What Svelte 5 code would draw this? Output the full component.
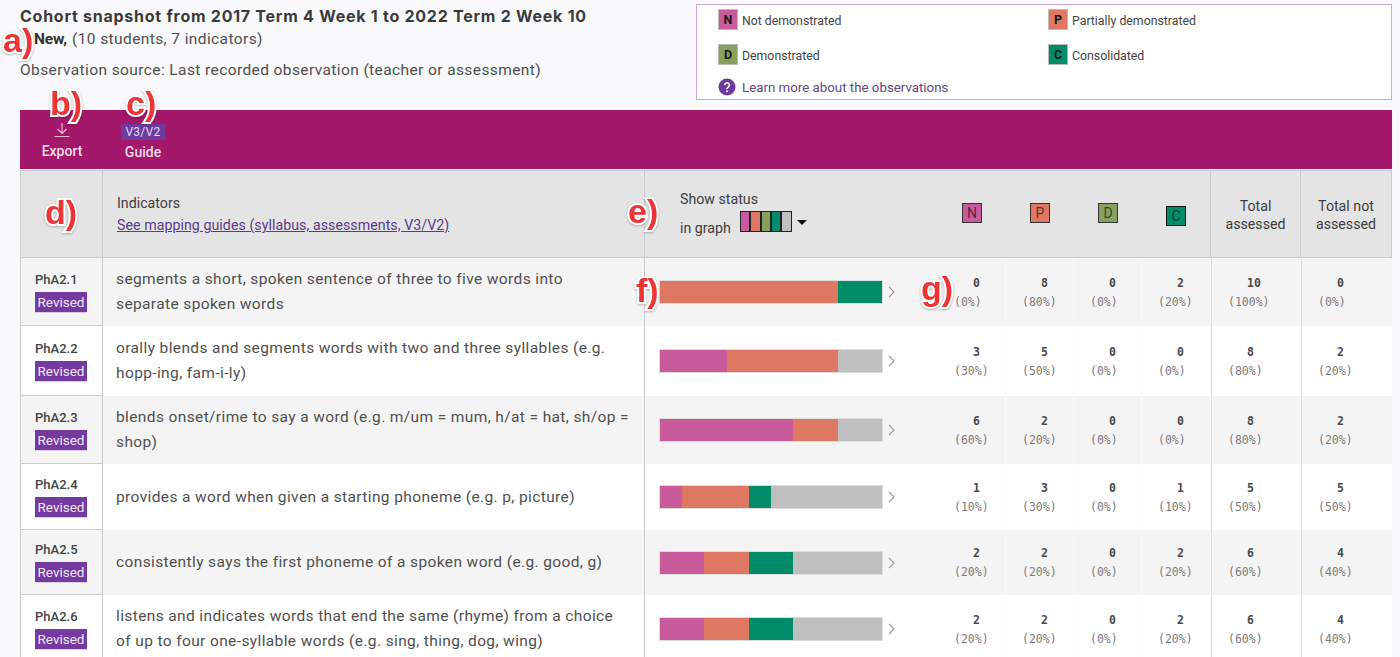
<script>
  const legend = [
    { k: 'N', label: 'Not demonstrated' },
    { k: 'P', label: 'Partially demonstrated' },
    { k: 'D', label: 'Demonstrated' },
    { k: 'C', label: 'Consolidated' }
  ];
  const rows = [
    { id: 'PhA2.1', lines: ['segments a short, spoken sentence of three to five words into', 'separate spoken words'], v: [0, 8, 0, 2] },
    { id: 'PhA2.2', lines: ['orally blends and segments words with two and three syllables (e.g.', 'hopp-ing, fam-i-ly)'], v: [3, 5, 0, 0] },
    { id: 'PhA2.3', lines: ['blends onset/rime to say a word (e.g. m/um = mum, h/at = hat, sh/op =', 'shop)'], v: [6, 2, 0, 0] },
    { id: 'PhA2.4', lines: ['provides a word when given a starting phoneme (e.g. p, picture)'], v: [1, 3, 0, 1] },
    { id: 'PhA2.5', lines: ['consistently says the first phoneme of a spoken word (e.g. good, g)'], v: [2, 2, 0, 2] },
    { id: 'PhA2.6', lines: ['listens and indicates words that end the same (rhyme) from a choice', 'of up to four one-syllable words (e.g. sing, thing, dog, wing)'], v: [2, 2, 0, 2] }
  ];
  const keys = ['N', 'P', 'D', 'C'];
  const total = 10;
  const sum = (v) => v.reduce((a, b) => a + b, 0);
  const notes = [
    { t: 'a)', c: 'na' }, { t: 'b)', c: 'nb' }, { t: 'c)', c: 'nc' }, { t: 'd)', c: 'nd' },
    { t: 'e)', c: 'ne' }, { t: 'f)', c: 'nf' }, { t: 'g)', c: 'ng' }
  ];
</script>

<div class="page">
  <header class="top">
    <div class="intro">
      <h1>Cohort snapshot from 2017 Term 4 Week 1 to 2022 Term 2 Week 10</h1>
      <p class="sub"><b>New,</b> (10 students, 7 indicators)</p>
      <p class="src">Observation source: Last recorded observation (teacher or assessment)</p>
    </div>
    <aside class="legend">
      <div class="legend-grid">
        {#each legend as l}
          <div class="legend-item">
            <span class="swatch s{l.k}">{l.k}</span>
            <span class="legend-label">{l.label}</span>
          </div>
        {/each}
      </div>
      <div class="learn">
        <svg width="18" height="18" viewBox="0 0 18 18"><circle cx="9" cy="9" r="8.5" fill="#6f3a9f"/><path d="M6.7 7.1a2.3 2.3 0 1 1 3.6 1.9c-.8.5-1.3 1-1.3 1.9" fill="none" stroke="#fff" stroke-width="1.6"/><circle cx="9" cy="13.2" r="1" fill="#fff"/></svg>
        <span>Learn more about the observations</span>
      </div>
    </aside>
  </header>

  <div class="toolbar">
    <div class="tool export">
      <svg width="18" height="16" viewBox="0 0 18 16" fill="none" stroke="#e9bcd6" stroke-width="1.2"><path d="M9 1v10M4.5 7 9 11.5 13.500 7M1.500 14.500h15"/></svg>
      <span>Export</span>
    </div>
    <div class="tool guide">
      <span class="vbadge">V3/V2</span>
      <span>Guide</span>
    </div>
  </div>

  <div class="table">
    <div class="th blank"></div>
    <div class="th ind">
      <span>Indicators</span>
      <span class="map">See mapping guides (syllabus, assessments, V3/V2)</span>
    </div>
    <div class="th graph">
      <span>Show status</span>
      <div class="graph-line">
        <span>in graph</span>
        <span class="mini">
          <i class="sN"></i><i class="sP"></i><i class="sD"></i><i class="sC"></i><i class="sG"></i>
        </span>
        <span class="caret"></span>
      </div>
    </div>
    <div class="th keys">
      {#each keys as k}
        <div class="keycell"><span class="key s{k} k{k}">{k}</span></div>
      {/each}
    </div>
    <div class="th tot">Total<br />assessed</div>
    <div class="th tot">Total not<br />assessed</div>

    {#each rows as r, i}
      <div class="td code" class:alt={i % 2 === 0}>
        <span>{r.id}</span>
        <span class="rev">Revised</span>
      </div>
      <div class="td text" class:alt={i % 2 === 0}>
        {#each r.lines as line}<div>{line}</div>{/each}
      </div>
      <div class="td bar-cell" class:alt={i % 2 === 0}>
        <div class="bar">
          {#each r.v as n, j}
            {#if n > 0}<span class="s{keys[j]}" style="width:{(n / total) * 100}%"></span>{/if}
          {/each}
          <span class="sG rest"></span>
        </div>
        <svg class="chev" width="7" height="12" viewBox="0 0 7 12" fill="none" stroke="#999" stroke-width="1.100"><path d="m1 1 5 5-5 5"/></svg>
      </div>
      <div class="nums">
        {#each r.v as n}
          <div class="num" class:alt={i % 2 === 0}>
            <b>{n}</b><span>({(n / total) * 100}%)</span>
          </div>
        {/each}
      </div>
      <div class="num wide" class:alt={i % 2 === 0}>
        <b>{sum(r.v)}</b><span>({(sum(r.v) / total) * 100}%)</span>
      </div>
      <div class="num wide" class:alt={i % 2 === 0}>
        <b>{total - sum(r.v)}</b><span>({((total - sum(r.v)) / total) * 100}%)</span>
      </div>
    {/each}
  </div>

  {#each notes as n}
    <span class="note {n.c}">{n.t}</span>
  {/each}
</div>

<style>
  :global(body) {
    margin: 0;
    background: #f9f9fb;
  }
  .page {
    position: relative;
    width: 1400px;
    height: 657px;
    overflow: hidden;
    font-family: Roboto, "Liberation Sans", sans-serif;
    color: #3f3f3f;
    background: #f9f9fb;
  }
  .top {
    display: flex;
    justify-content: space-between;
    height: 110px;
    padding: 4px 8px 0 20px;
    box-sizing: border-box;
  }
  h1 {
    margin: 2px 0 0;
    font: 700 16px/20px Inter, "Open Sans", sans-serif;
    letter-spacing: 0.74px;
    color: #3b3b3b;
  }
  .sub, .src {
    margin: 0;
    font-size: 15.5px;
    line-height: 20px;
    letter-spacing: 0.4px;
    color: #505050;
  }
  .sub { margin-top: 3px; padding-left: 14px; }
  .sub b { font-weight: 700; color: #333; letter-spacing: -0.2px; margin-right: 1px; }
  .src { margin-top: 11px; }
  .legend {
    width: 696px;
    height: 96px;
    box-sizing: border-box;
    border: 1px solid #c9aae3;
    background: #fff;
    padding: 4px 0 0 21px;
    font-size: 12.3px;
    color: #444;
  }
  .legend-grid {
    display: grid;
    grid-template-columns: 330px 1fr;
    grid-auto-rows: 35px;
  }
  .legend-item {
    display: flex;
    align-items: flex-start;
    gap: 4px;
  }
  .legend-label {
    line-height: 22px;
    padding-top: 1px;
    margin-right: 1px;
  }
  .swatch {
    width: 20px;
    height: 21px;
    box-sizing: border-box;
    border: 1px solid #bbb;
    text-align: center;
    font-weight: 700;
    font-size: 12.5px;
    line-height: 19px;
    color: #1a1a1a;
  }
  .learn {
    display: flex;
    align-items: center;
    gap: 6px;
    margin-top: -1px;
    font-size: 13.3px;
    color: #5f4a80;
  }
  .sN { background: #c95a9b; }
  .sP { background: #df7863; }
  .sD { background: #87a05e; }
  .sC { background: #008c68; }
  .sG { background: #bfbfbf; }
  .toolbar {
    display: flex;
    width: 1372px;
    height: 59px;
    margin-left: 20px;
    background: #a3186a;
    color: #f3dbe9;
    font-size: 14px;
    font-weight: 500;
  }
  .tool {
    display: flex;
    flex-direction: column;
    align-items: center;
    box-sizing: border-box;
  }
  .export { width: 84px; padding-top: 12px; gap: 5px; }
  .guide { width: 76px; margin-left: 1px; padding-top: 14px; gap: 4px; }
  .vbadge {
    background: #6f3a9f;
    color: #e6dcf0;
    font-size: 12px;
    font-weight: 400;
    line-height: 16px;
    padding: 0 4px;
    letter-spacing: 0.3px;
  }
  .table {
    display: grid;
    width: 1372px;
    margin: 1px 0 0 20px;
    grid-template-columns: 83px 542px 293px 273px 90px 91px;
    grid-template-rows: 88px 68px 70px 68px 66px 65px 68px;
  }
  .th {
    background: #e4e4e4;
    box-sizing: border-box;
    border-top: 1px solid #ccc;
    border-bottom: 1px solid #ccc;
    font-size: 14.2px;
    color: #3d3d3d;
  }
  .blank { border-left: 1px solid #ccc; border-right: 1px solid #ccc; }
  .ind {
    display: flex;
    flex-direction: column;
    gap: 8px;
    padding: 25px 0 0 14px;
    border-right: 1px solid #ccc;
    line-height: 14px;
  }
  .map { color: #5b3a8c; text-decoration: underline; letter-spacing: 0.05px; }
  .graph {
    padding: 20px 0 0 35px;
    line-height: 17px;
  }
  .graph-line {
    display: flex;
    align-items: flex-start;
    margin-top: 4px;
  }
  .graph-line > span:first-child { margin-top: 8px; }
  .mini {
    display: flex;
    gap: 2px;
    width: 52px;
    height: 21px;
    margin: -1px 0 0 9px;
    box-sizing: border-box;
    border: 1px solid #222;
    background: #222;
  }
  .mini i {
    flex: 1 1 0;
  }
  .caret {
    width: 0;
    height: 0;
    margin: 8px 0 0 5px;
    border: 5px solid transparent;
    border-top-color: #111;
    border-bottom: 0;
  }
  .keys {
    display: grid;
    grid-template-columns: repeat(4, 1fr);
    border-right: 1px solid #ccc;
  }
  .keycell { padding: 32px 0 0 24px; }
  .key {
    display: block;
    width: 20px;
    height: 20px;
    box-sizing: border-box;
    border: 1px solid #333;
    text-align: center;
    font-size: 14px;
    line-height: 18px;
    color: rgba(0, 0, 0, 0.6);
  }
  .kC { margin-top: 3px; border-color: #111; }
  .tot {
    text-align: center;
    line-height: 18px;
    padding-top: 26px;
    border-right: 1px solid #ccc;
  }
  .td { background: #fff; box-sizing: border-box; }
  .td.alt, .num.alt { background: #f4f4f4; }
  .code {
    display: flex;
    flex-direction: column;
    justify-content: center;
    align-items: flex-start;
    gap: 5px;
    padding: 1px 0 0 14px;
    border-left: 1px solid #ccc;
    border-right: 1px solid #ccc;
    border-bottom: 1px solid #ccc;
    font-size: 13px;
    font-weight: 500;
    line-height: 15px;
    color: #444;
  }
  .rev {
    background: #743a9f;
    color: #efe6f6;
    font-size: 13.5px;
    font-weight: 400;
    line-height: 20px;
    width: 52px;
    text-align: center;
    border-bottom: 1px solid #d9d0e4;
  }
  .text {
    display: flex;
    flex-direction: column;
    justify-content: center;
    padding: 0 0 0 13px;
    border-right: 1px solid #ccc;
    font-size: 15.5px;
    line-height: 25px;
    letter-spacing: 0.38px;
    color: #505050;
    white-space: nowrap;
  }
  .bar-cell {
    display: flex;
    align-items: center;
    padding-left: 15px;
    gap: 6px;
  }
  .bar {
    display: flex;
    width: 222px;
    height: 22px;
    outline: 1px solid #ddd;
  }
  .rest { flex: 1; }
  .nums {
    display: grid;
    grid-template-columns: 68px 68px 68px 69px;
  }
  .num {
    display: flex;
    flex-direction: column;
    justify-content: center;
    align-items: flex-start;
    box-sizing: border-box;
    padding: 1px 0 0 16px;
    margin-right: 1px;
    font: 11.5px/19px "DejaVu Sans Mono", monospace;
    color: #7c7c7c;
    background: #fff;
  }
  .num b {
    margin-left: 19px;
    font-weight: 700;
    color: #4a4a4a;
  }
  .wide {
    border-left: 1px solid #ddd;
    margin-right: 0;
  }
  .note {
    position: absolute;
    font: 700 34px/1 "Liberation Sans", sans-serif;
    color: #ee3535;
    -webkit-text-stroke: 4px #fff;
    paint-order: stroke fill;
    filter: drop-shadow(0 1px 1px rgba(0, 0, 0, 0.25));
  }
  .na { left: 3px; top: 23px; }
  .nb { left: 50px; top: 86px; }
  .nc { left: 126px; top: 86px; }
  .nd { left: 45px; top: 195px; }
  .ne { left: 628px; top: 194px; }
  .nf { left: 636px; top: 273px; }
  .ng { left: 921px; top: 271px; }
</style>
